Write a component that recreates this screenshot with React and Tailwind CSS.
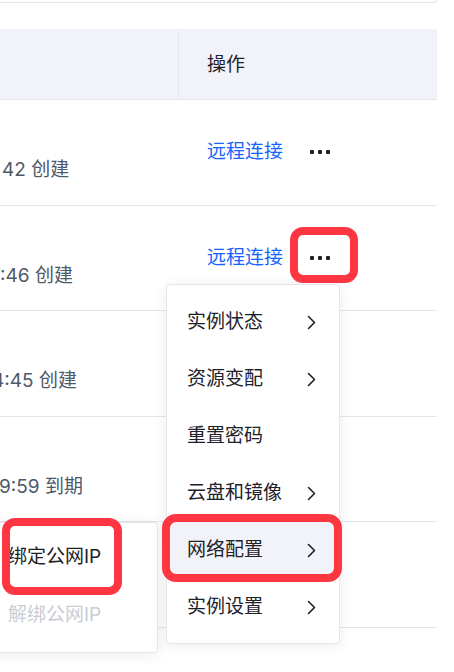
import React from "react";

const font = { fontFamily: '"Inter", "Noto Sans CJK SC", sans-serif' };

function Chevron() {
  return (
    <svg width="9" height="15" viewBox="0 0 9 15" fill="none">
      <path d="M1.5 1.5L7.5 7.5L1.5 13.5" stroke="#1d2129" strokeWidth="1.6" strokeLinecap="round" strokeLinejoin="round" />
    </svg>
  );
}

function Dots() {
  return (
    <svg width="20" height="6" viewBox="0 0 20 6" fill="#1d2129">
      <rect x="0" y="1" width="4" height="4" rx="1" />
      <rect x="8" y="1" width="4" height="4" rx="1" />
      <rect x="16" y="1" width="4" height="4" rx="1" />
    </svg>
  );
}

const rows = [
  { text: "42 创建", ml: "ml-[2px]", action: true },
  { text: "7:46 创建", ml: "ml-[-10px]", action: true },
  { text: "4:45 创建", ml: "ml-[-8px]", action: false },
  { text: "9:59 到期", ml: "ml-[-1px]", action: false },
  { text: "", ml: "", action: false },
];

const menu = [
  { label: "实例状态", sub: true },
  { label: "资源变配", sub: true },
  { label: "重置密码", sub: false },
  { label: "云盘和镜像", sub: true },
  { label: "网络配置", sub: true, active: true },
  { label: "实例设置", sub: true },
];

export default function App() {
  return (
    <div className="relative w-[454px] h-[672px] bg-white overflow-hidden" style={font}>
      <div className="h-[3px] w-[437px] border-b border-r border-[#e5e6eb] rounded-br-[3px]" />
      <div className="mt-[26px] w-[437px]">
        <div className="flex h-[71px] bg-[#f2f3f8] border-b border-[#e5e6eb]">
          <div className="w-[179px] border-r border-[#e5e6eb]" />
          <div className="flex-1 flex items-center pl-[28px] pt-[2px] text-[19px] text-[#1d2129]">操作</div>
        </div>
        {rows.map((r, i) => (
          <div key={i} className="flex h-[105.6px] border-b border-[#e5e6eb]">
            <div className="w-[179px] overflow-hidden pt-[55px]">
              {r.text ? (
                <div className={`whitespace-nowrap text-[19px] leading-[30px] text-[#4e5969] ${r.ml}`}>{r.text}</div>
              ) : null}
            </div>
            <div className="flex-1 flex items-center pl-[28px]">
              {r.action ? (
                <>
                  <span className="text-[19px] text-[#1664ff] leading-[28px]">远程连接</span>
                  <span className="ml-[27px] flex items-center">
                    <Dots />
                  </span>
                </>
              ) : null}
            </div>
          </div>
        ))}
      </div>

      {/* submenu */}
      <div className="absolute left-[-20px] top-[522px] w-[178px] flex flex-col gap-[5px] bg-white border border-[#e5e6eb] rounded-[4px] shadow-[0_2px_14px_rgba(0,0,0,0.08)] pt-[6px] pb-[12px]">
        <div className="mx-[4px] h-[53px] flex items-center pt-[4px] pl-[23px] text-[19px] text-[#1d2129] rounded-[4px]">绑定公网IP</div>
        <div className="mx-[4px] h-[53px] flex items-center pt-[4px] pl-[23px] text-[19px] text-[#c9cdd4] rounded-[4px]">解绑公网IP</div>
      </div>

      {/* main dropdown */}
      <div className="absolute left-[166px] top-[284px] w-[174px] flex flex-col gap-[4px] bg-white border border-[#e5e6eb] rounded-[4px] shadow-[0_2px_14px_rgba(0,0,0,0.08)] pt-[9px] pb-[11px]">
        {menu.map((m, i) => (
          <div
            key={i}
            className={`mx-[4px] h-[53px] flex items-center justify-between pt-[4px] pl-[16px] pr-[19px] rounded-[4px] text-[19px] text-[#1d2129] ${m.active ? "bg-[#f2f3f8]" : ""}`}
          >
            <span>{m.label}</span>
            {m.sub ? <Chevron /> : null}
          </div>
        ))}
      </div>

      {/* annotation boxes */}
      <div className="absolute left-[290px] top-[227px] w-[68px] h-[56px] border-[8px] border-[#fd3642] rounded-[13px]" />
      <div className="absolute left-[162px] top-[514px] w-[180px] h-[68px] border-[8px] border-[#fd3642] rounded-[14px]" />
      <div className="absolute left-[2px] top-[518px] w-[120px] h-[77px] border-[8px] border-[#fd3642] rounded-[13px]" />
    </div>
  );
}
